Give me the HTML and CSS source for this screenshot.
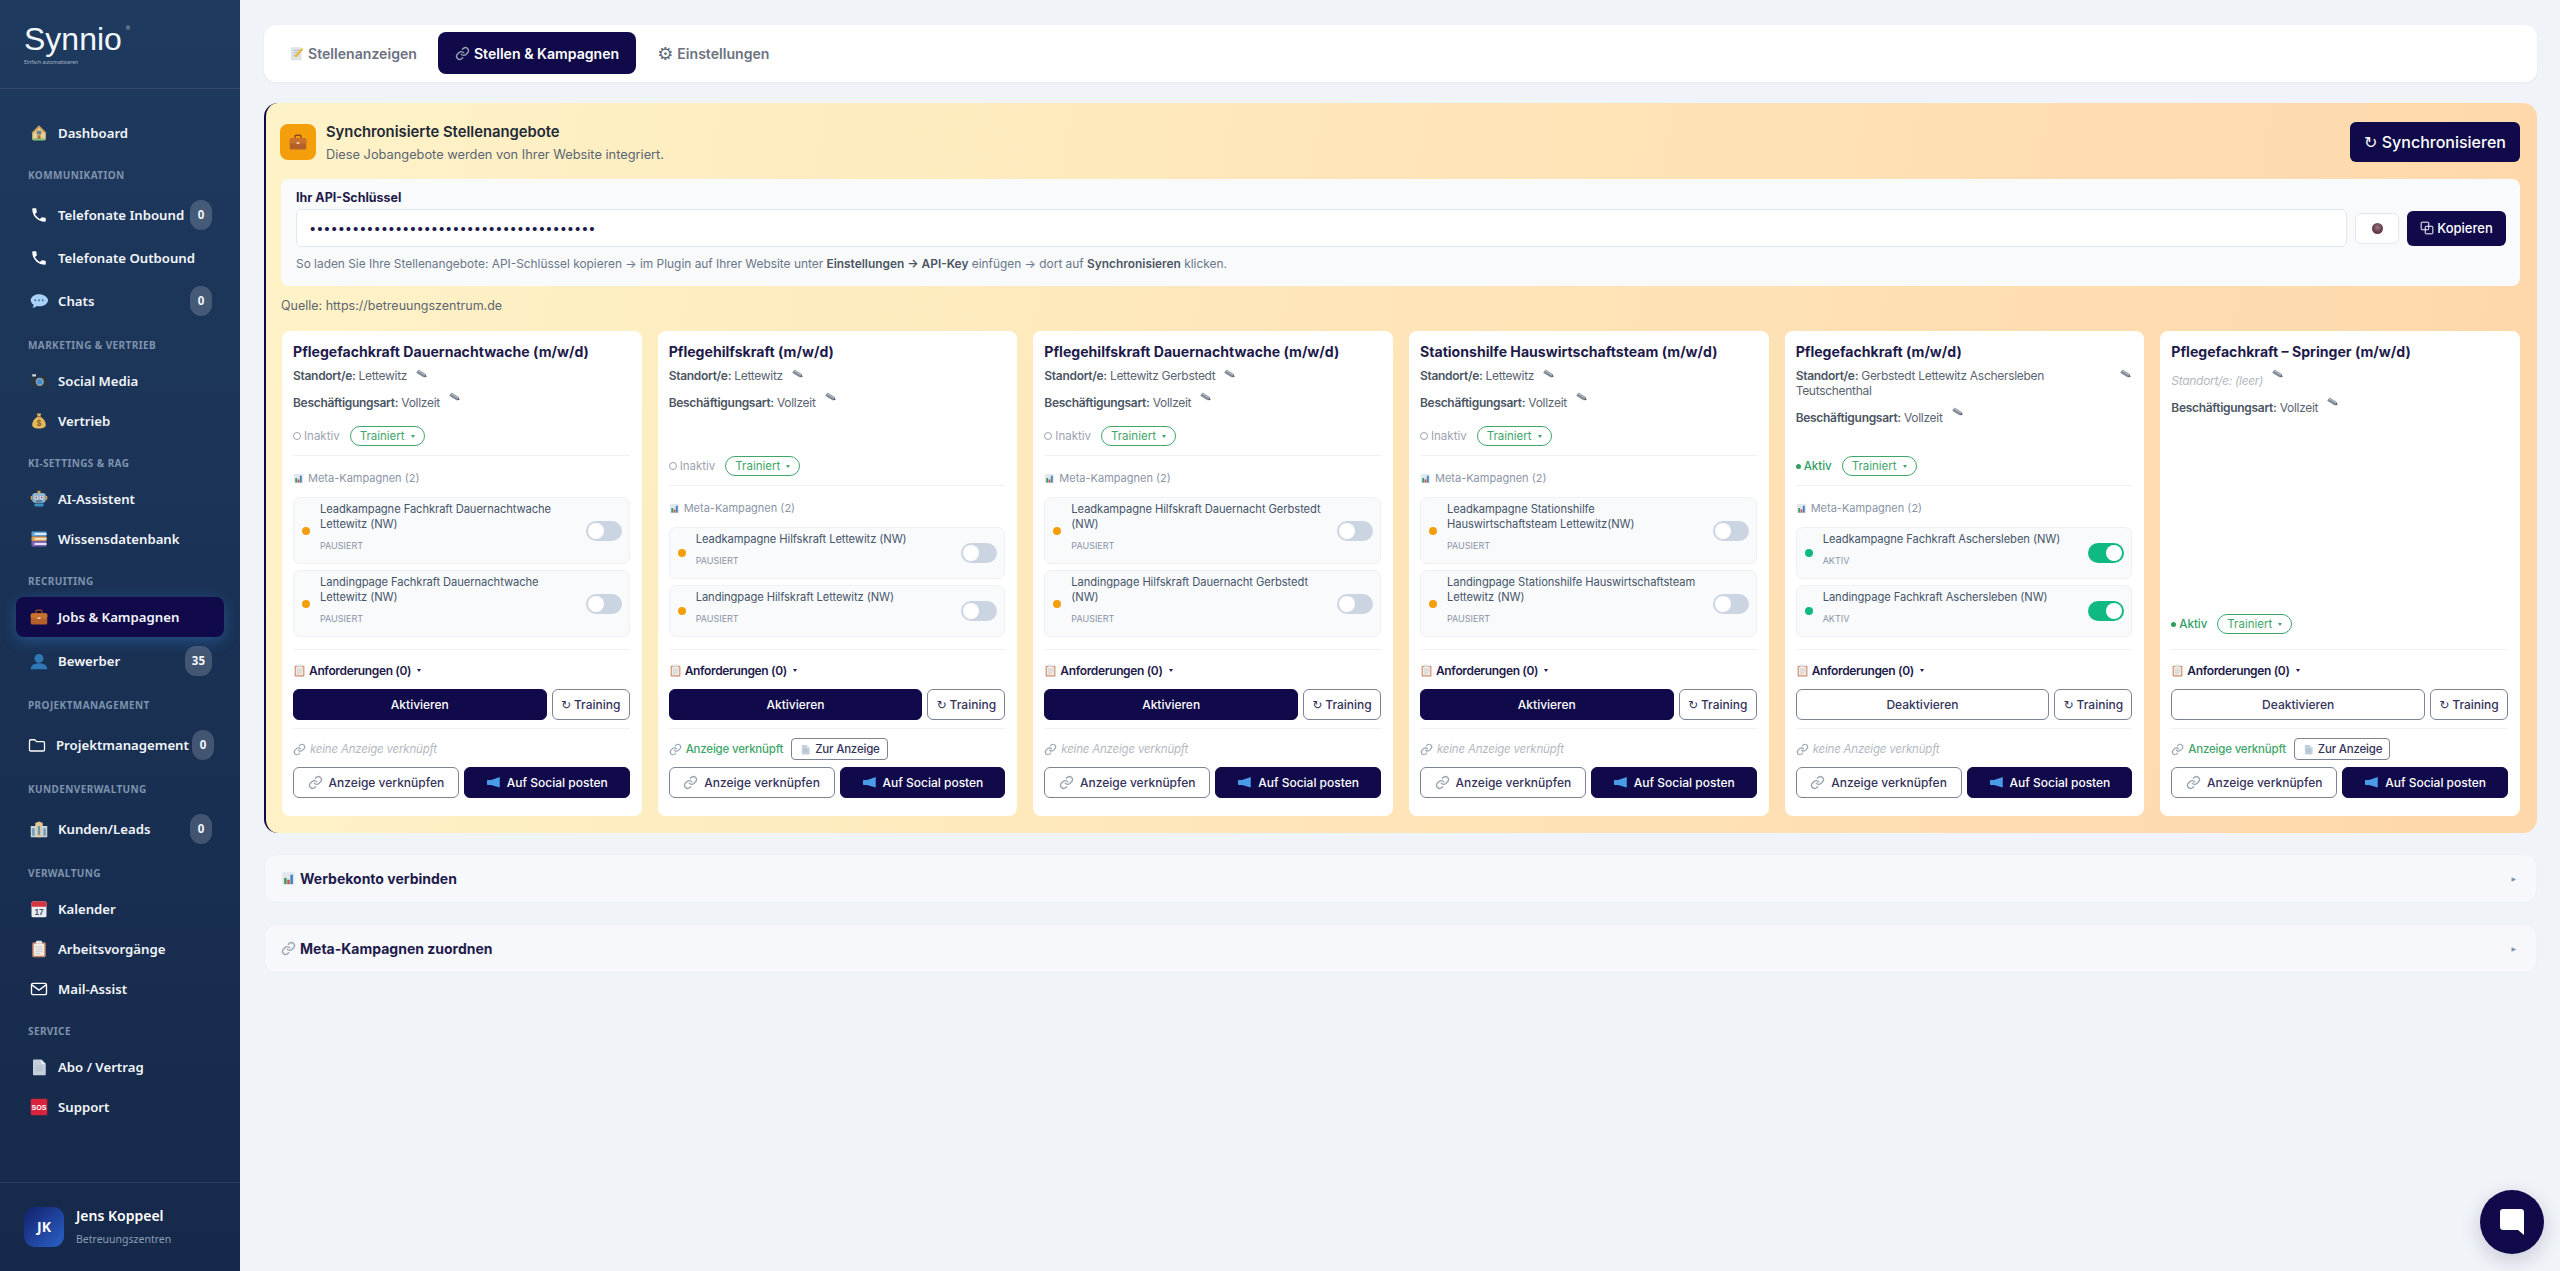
FILE: index.html
```html
<!DOCTYPE html>
<html lang="de">
<head>
  <meta charset="UTF-8">
  <meta name="viewport" content="width=device-width, initial-scale=1.0">
  <title>Jobs &amp; Kampagnen</title>
  <link rel="stylesheet" href="styles.css">
</head>
<body>

  <!-- icon sprite -->
  <svg class="sprite" xmlns="http://www.w3.org/2000/svg">
    <symbol id="i-house" viewBox="0 0 24 24"><path d="M12 2 3 11v10h18V11z" fill="#e9cf8f"/><path d="M12 2 2 12l2 1 8-8 8 8 2-1z" fill="#c99a55"/><rect x="9" y="9" width="6" height="5" fill="#6f7f92"/><rect x="4" y="19" width="16" height="3" fill="#8cc27f"/><rect x="10" y="15" width="4" height="5" fill="#a8743f"/></symbol>
    <symbol id="i-phone" viewBox="0 0 24 24"><path fill="#fff" d="M6.6 10.8c1.4 2.8 3.8 5.1 6.6 6.6l2.2-2.2c.3-.3.7-.4 1-.2 1.1.4 2.3.6 3.6.6.6 0 1 .4 1 1V20c0 .6-.4 1-1 1C10.6 21 3 13.4 3 4c0-.6.4-1 1-1h3.5c.6 0 1 .4 1 1 0 1.3.2 2.5.6 3.6.1.3 0 .7-.2 1z"/></symbol>
    <symbol id="i-chat" viewBox="0 0 24 24"><path fill="#a9d1f5" d="M12 3C6 3 1 6.6 1 11c0 2.500 1.600 4.700 4 6.100-.2 1.500-1 2.800-1.800 3.900 2.300-.2 4.400-1.100 6-2.400 1.200.3 2.500.4 3.800.4 6 0 11-3.600 11-8S18 3 12 3z"/><circle cx="7" cy="11" r="1.300" fill="#3b6ea5"/><circle cx="12" cy="11" r="1.300" fill="#3b6ea5"/><circle cx="17" cy="11" r="1.300" fill="#3b6ea5"/></symbol>
    <symbol id="i-camera" viewBox="0 0 24 24"><rect x="1" y="6" width="22" height="14" rx="2" fill="#2a3544"/><rect x="3" y="3" width="5" height="3" fill="#cfd6dd"/><circle cx="13" cy="13" r="5.500" fill="#8fa3b5"/><circle cx="13" cy="13" r="3.500" fill="#3f8fd0"/></symbol>
    <symbol id="i-robot" viewBox="0 0 24 24"><rect x="10" y="1" width="4" height="3" fill="#d9a441"/><rect x="3" y="4" width="18" height="13" rx="4" fill="#8db4cc"/><circle cx="8.500" cy="10" r="2.500" fill="#e4efff"/><circle cx="15.500" cy="10" r="2.500" fill="#e4efff"/><circle cx="8.500" cy="10" r="1.200" fill="#a03a3a"/><circle cx="15.500" cy="10" r="1.200" fill="#a03a3a"/><rect x="8" y="14" width="8" height="1.500" fill="#3d5a75"/><rect x="6" y="18" width="12" height="4" rx="1" fill="#3f8fc4"/><rect x="1" y="8" width="2" height="5" fill="#d9a441"/><rect x="21" y="8" width="2" height="5" fill="#d9a441"/></symbol>
    <symbol id="i-books" viewBox="0 0 24 24"><rect x="2" y="2" width="20" height="6.500" rx="1" fill="#5aa0d8"/><rect x="2" y="8.500" width="20" height="6.500" rx="1" fill="#e39a4a"/><rect x="2" y="15" width="20" height="7" rx="1" fill="#7a64b8"/><rect x="6" y="4" width="16" height="2.500" fill="#e8eef5"/><rect x="6" y="10.500" width="16" height="2.500" fill="#f6e6cf"/><rect x="6" y="17.200" width="16" height="2.800" fill="#e6e0f5"/></symbol>
    <symbol id="i-case" viewBox="0 0 24 24"><path d="M8 7V4.500C8 3.700 8.700 3 9.500 3h5c.8 0 1.500.7 1.500 1.500V7" fill="none" stroke="#8a4a20" stroke-width="1.800"/><rect x="1" y="7" width="22" height="15" rx="2" fill="#b4602a"/><rect x="1" y="7" width="22" height="7" rx="2" fill="#c9702f"/><rect x="10" y="12.500" width="4" height="2" fill="#f3d9b8"/></symbol>
    <symbol id="i-bust" viewBox="0 0 24 24"><circle cx="12" cy="8.500" r="6" fill="#2f78b5"/><path d="M1 23c0-5 4-8 11-8s11 3 11 8z" fill="#2f78b5"/></symbol>
    <symbol id="i-folder" viewBox="0 0 24 24"><path d="M2 6.500C2 5.700 2.700 5 3.500 5h5.500l2.500 2.500h9c.8 0 1.500.7 1.500 1.500v9.500c0 .8-.7 1.500-1.500 1.500h-17C2.700 20 2 19.300 2 18.500z" fill="none" stroke="#fff" stroke-width="1.700"/></symbol>
    <symbol id="i-office" viewBox="0 0 24 24"><rect x="1" y="8" width="22" height="15" fill="#c8d3d8"/><path d="M7 8V4l5-2 5 2v4z" fill="#e3c98f"/><rect x="9" y="5" width="6" height="18" fill="#e3c98f"/><g fill="#6f94ad"><rect x="3" y="11" width="3" height="10"/><rect x="18" y="11" width="3" height="10"/><rect x="10.500" y="8" width="3" height="12"/></g></symbol>
    <symbol id="i-clip" viewBox="0 0 24 24"><rect x="3" y="3" width="18" height="20" rx="2" fill="#c98468"/><rect x="5" y="5" width="14" height="16" fill="#f5ede3"/><rect x="8" y="1" width="8" height="4" rx="1" fill="#dfe5ea"/><path d="M7 9h10M7 12h10M7 15h10M7 18h7" stroke="#b7bfc8" stroke-width="1"/></symbol>
    <symbol id="i-mail" viewBox="0 0 24 24"><rect x="2" y="4.500" width="20" height="15" rx="2" fill="none" stroke="#fff" stroke-width="1.800"/><path d="m2.500 6.500 9.500 7 9.500-7" fill="none" stroke="#fff" stroke-width="1.800"/></symbol>
    <symbol id="i-page" viewBox="0 0 24 24"><path d="M4 3c0-.6.4-1 1-1h10l6 6v14c0 .6-.4 1-1 1H5c-.6 0-1-.4-1-1z" fill="#c3d0dc"/><path d="M15 2v6h6z" fill="#e6edf3"/><path d="M7 11h10M7 14h10M7 17h10" stroke="#a5b4c2" stroke-width="1"/></symbol>
    <symbol id="i-memo" viewBox="0 0 24 24"><rect x="3" y="2" width="17" height="21" fill="#dfe3e8"/><path d="M7 7h9M7 11h9M7 15h6" stroke="#aab2bc" stroke-width="1.200"/><path d="m9 18 1-4L20 3l3 2.500L13 17z" fill="#e6b94a"/></symbol>
    <symbol id="i-link" viewBox="0 0 24 24"><g fill="none" stroke="#9aa5b1" stroke-width="2.200" stroke-linecap="round"><path d="M10 13a5 5 0 0 0 7.500.5l3-3a5 5 0 0 0-7-7l-1.700 1.700"/><path d="M14 11a5 5 0 0 0-7.500-.5l-3 3a5 5 0 0 0 7 7l1.700-1.700"/></g></symbol>
    <symbol id="i-chart" viewBox="0 0 24 24"><rect x="2" y="2" width="20" height="20" fill="#e2e8ee"/><rect x="5" y="11" width="4" height="10" fill="#3f9a63"/><rect x="10" y="14" width="4" height="7" fill="#d3524a"/><rect x="15" y="6" width="4" height="15" fill="#3b82c4"/></symbol>
    <symbol id="i-pencil" viewBox="0 0 24 24"><g transform="rotate(32 12 12)"><rect x="1" y="8" width="17" height="8" fill="#7f8a98"/><path d="M1 10.500h17" stroke="#d5dae0" stroke-width="1.400"/><path d="m18 8 5 4-5 4z" fill="#5c6572"/></g></symbol>
    <symbol id="i-mega" viewBox="0 0 24 24"><path d="M22 3v17L8 16H3c-1 0-1.500-.5-1.500-1.500v-5C1.500 8.500 2 8 3 8h5z" fill="#4a9be8"/></symbol>
    <symbol id="i-copy" viewBox="0 0 24 24"><g fill="none" stroke="#fff" stroke-width="1.700"><rect x="2" y="2" width="13" height="13" rx="1.500"/><rect x="9" y="9" width="13" height="13" rx="1.500"/></g></symbol>
  </svg>

  <aside class="sidebar">
    <div class="logo">
      <div class="logo-name">Synnio<sup>®</sup></div>
      <div class="logo-sub">Einfach automatisieren</div>
    </div>

    <nav class="nav">
      <a class="nav-item"><svg class="nav-icon"><use href="#i-house"/></svg>Dashboard</a>

      <div class="nav-label">Kommunikation</div>
      <a class="nav-item has-badge"><svg class="nav-icon"><use href="#i-phone"/></svg>Telefonate Inbound<span class="badge">0</span></a>
      <a class="nav-item has-badge"><svg class="nav-icon"><use href="#i-phone"/></svg>Telefonate Outbound</a>
      <a class="nav-item has-badge"><svg class="nav-icon"><use href="#i-chat"/></svg>Chats<span class="badge">0</span></a>

      <div class="nav-label">Marketing &amp; Vertrieb</div>
      <a class="nav-item"><svg class="nav-icon"><use href="#i-camera"/></svg>Social Media</a>
      <a class="nav-item">
        <svg class="nav-icon" viewBox="0 0 24 24"><path fill="#e6b85c" d="M9 2h6l-1.500 4c4 2 7.500 6.500 7.500 11 0 3.500-3 5-9 5s-9-1.500-9-5c0-4.500 3.500-9 7.500-11z"/><rect x="9.500" y="5.500" width="5" height="1.500" fill="#9a6f2b"/><text x="12" y="19" font-size="11" font-weight="700" text-anchor="middle" fill="#7c5a1f" font-family="Liberation Sans">$</text></svg>Vertrieb
      </a>

      <div class="nav-label">KI-Settings &amp; RAG</div>
      <a class="nav-item"><svg class="nav-icon"><use href="#i-robot"/></svg>AI-Assistent</a>
      <a class="nav-item"><svg class="nav-icon"><use href="#i-books"/></svg>Wissensdatenbank</a>

      <div class="nav-label">Recruiting</div>
      <a class="nav-item active"><svg class="nav-icon"><use href="#i-case"/></svg>Jobs &amp; Kampagnen</a>
      <a class="nav-item has-badge"><svg class="nav-icon"><use href="#i-bust"/></svg>Bewerber<span class="badge">35</span></a>

      <div class="nav-label">Projektmanagement</div>
      <a class="nav-item has-badge nudge"><svg class="nav-icon"><use href="#i-folder"/></svg>Projektmanagement<span class="badge">0</span></a>

      <div class="nav-label">Kundenverwaltung</div>
      <a class="nav-item has-badge"><svg class="nav-icon"><use href="#i-office"/></svg>Kunden/Leads<span class="badge">0</span></a>

      <div class="nav-label">Verwaltung</div>
      <a class="nav-item">
        <svg class="nav-icon" viewBox="0 0 24 24"><rect x="2" y="2" width="20" height="21" rx="2" fill="#e8edf2"/><path d="M2 4c0-1.100.9-2 2-2h16c1.100 0 2 .9 2 2v5H2z" fill="#d9333f"/><text x="12" y="20.500" font-size="11" text-anchor="middle" fill="#44566a" font-family="Liberation Sans">17</text></svg>Kalender
      </a>
      <a class="nav-item"><svg class="nav-icon"><use href="#i-clip"/></svg>Arbeitsvorgänge</a>
      <a class="nav-item"><svg class="nav-icon"><use href="#i-mail"/></svg>Mail-Assist</a>

      <div class="nav-label">Service</div>
      <a class="nav-item"><svg class="nav-icon"><use href="#i-page"/></svg>Abo / Vertrag</a>
      <a class="nav-item">
        <svg class="nav-icon" viewBox="0 0 24 24"><rect x="1" y="1" width="22" height="22" rx="2" fill="#d9233c"/><text x="12" y="16" font-size="9.500" font-weight="700" text-anchor="middle" fill="#fff" font-family="Liberation Sans">SOS</text></svg>Support
      </a>
    </nav>

    <div class="user">
      <div class="avatar">JK</div>
      <div>
        <div class="user-name">Jens Koppeel</div>
        <div class="user-org">Betreuungszentren</div>
      </div>
    </div>
  </aside>

  <main class="main">
    <div class="tabs">
      <button class="tab"><svg class="tab-icon"><use href="#i-memo"/></svg>Stellenanzeigen</button>
      <button class="tab active"><svg class="tab-icon"><use href="#i-link"/></svg>Stellen &amp; Kampagnen</button>
      <button class="tab"><span class="gear">⚙</span>Einstellungen</button>
    </div>

    <section class="panel">
      <div class="panel-head">
        <div class="panel-icon"><svg><use href="#i-case"/></svg></div>
        <div class="panel-titles">
          <div class="panel-title">Synchronisierte Stellenangebote</div>
          <div class="panel-sub">Diese Jobangebote werden von Ihrer Website integriert.</div>
        </div>
        <button class="btn-sync"><span class="sym">↻</span> Synchronisieren</button>
      </div>

      <div class="api-box">
        <div class="api-label">Ihr API-Schlüssel</div>
        <div class="api-row">
          <div class="api-input">••••••••••••••••••••••••••••••••••••••••</div>
          <button class="btn-eye"><span class="eye"></span></button>
          <button class="btn-copy"><svg><use href="#i-copy"/></svg>Kopieren</button>
        </div>
        <div class="api-help">So laden Sie Ihre Stellenangebote: API-Schlüssel kopieren → im Plugin auf Ihrer Website unter <b>Einstellungen → API-Key</b> einfügen → dort auf <b>Synchronisieren</b> klicken.</div>
      </div>

      <div class="source">Quelle: https://betreuungszentrum.de</div>

      <div class="cards" id="job-cards">
        <!-- job cards are added here -->
      </div>
    </section>

    <div class="fold"><svg class="fold-icon"><use href="#i-chart"/></svg>Werbekonto verbinden<span class="fold-arrow">▶</span></div>
    <div class="fold"><svg class="fold-icon"><use href="#i-link"/></svg>Meta-Kampagnen zuordnen<span class="fold-arrow">▶</span></div>
  </main>

  <button class="chat-btn">
    <svg viewBox="0 0 24 26" width="24" height="26"><path fill="#fff" d="M3 0h18c1.700 0 3 1.300 3 3v23l-6-5H3c-1.700 0-3-1.300-3-3V3C0 1.300 1.300 0 3 0z"/></svg>
  </button>

  <script>
    const jobs = [
      {
        title: "Pflegefachkraft Dauernachtwache (m/w/d)", place: "Lettewitz", active: false, linked: false,
        campaigns: ["Leadkampagne Fachkraft Dauernachtwache Lettewitz (NW)", "Landingpage Fachkraft Dauernachtwache Lettewitz (NW)"]
      },
      {
        title: "Pflegehilfskraft (m/w/d)", place: "Lettewitz", active: false, linked: true,
        campaigns: ["Leadkampagne Hilfskraft Lettewitz (NW)", "Landingpage Hilfskraft Lettewitz (NW)"]
      },
      {
        title: "Pflegehilfskraft Dauernachtwache (m/w/d)", place: "Lettewitz Gerbstedt", active: false, linked: false,
        campaigns: ["Leadkampagne Hilfskraft Dauernacht Gerbstedt (NW)", "Landingpage Hilfskraft Dauernacht Gerbstedt (NW)"]
      },
      {
        title: "Stationshilfe Hauswirtschaftsteam (m/w/d)", place: "Lettewitz", active: false, linked: false,
        campaigns: ["Leadkampagne Stationshilfe Hauswirtschaftsteam Lettewitz(NW)", "Landingpage Stationshilfe Hauswirtschaftsteam Lettewitz (NW)"]
      },
      {
        title: "Pflegefachkraft (m/w/d)", place: "Gerbstedt Lettewitz Aschersleben Teutschenthal", active: true, linked: false,
        campaigns: ["Leadkampagne Fachkraft Aschersleben (NW)", "Landingpage Fachkraft Aschersleben (NW)"]
      },
      {
        title: "Pflegefachkraft – Springer (m/w/d)", place: "", active: true, linked: true,
        campaigns: []
      }
    ];

    const icon = (name, cls) => `<svg class="${cls}"><use href="#i-${name}"/></svg>`;

    const container = document.getElementById("job-cards");

    jobs.forEach(job => {
      const card = document.createElement("div");
      card.className = "card";

      const place = job.place
        ? `<div class="row"><span><b>Standort/e:</b> ${job.place}</span>${icon("pencil", "pencil")}</div>`
        : `<div class="row empty"><span>Standort/e: (leer)</span>${icon("pencil", "pencil")}</div>`;

      const status = job.active
        ? `<span class="state on"><i class="pip"></i>Aktiv</span>`
        : `<span class="state"><i class="ring"></i>Inaktiv</span>`;

      let meta = "";
      if (job.campaigns.length) {
        const rows = job.campaigns.map(name => `
          <div class="camp">
            <span class="dot ${job.active ? "on" : ""}"></span>
            <div class="camp-text">
              <div class="camp-name">${name}</div>
              <div class="camp-state">${job.active ? "Aktiv" : "Pausiert"}</div>
            </div>
            <span class="toggle ${job.active ? "on" : ""}"></span>
          </div>`).join("");
        meta = `
          <div class="line"></div>
          <div class="meta-label">${icon("chart", "meta-icon")}Meta-Kampagnen (${job.campaigns.length})</div>
          ${rows}`;
      }

      const link = job.linked
        ? `${icon("link", "link-icon")}<span class="link-ok">Anzeige verknüpft</span><button class="btn-mini">${icon("page", "mini-icon")}Zur Anzeige</button>`
        : `${icon("link", "link-icon")}<span class="link-none">keine Anzeige verknüpft</span>`;

      card.innerHTML = `
        <div class="card-title">${job.title}</div>
        ${place}
        <div class="row work"><span><b>Beschäftigungsart:</b> Vollzeit</span>${icon("pencil", "pencil")}</div>
        <div class="status-row">${status}<span class="pill">Trainiert<i class="caret"></i></span></div>
        ${meta}
        <div class="line low"></div>
        <div class="reqs">${icon("clip", "req-icon")}Anforderungen (0)<i class="caret dark"></i></div>
        <div class="btn-row">
          <button class="btn ${job.active ? "ghost" : "solid"} grow">${job.active ? "Deaktivieren" : "Aktivieren"}</button>
          <button class="btn ghost train"><span class="sym">↻</span>Training</button>
        </div>
        <div class="line mid"></div>
        <div class="link-row">${link}</div>
        <div class="btn-row">
          <button class="btn ghost half">${icon("link", "btn-icon")}Anzeige verknüpfen</button>
          <button class="btn solid half">${icon("mega", "btn-icon")}Auf Social posten</button>
        </div>`;

      container.appendChild(card);
    });
  </script>
</body>
</html>
```

FILE: styles.css
```css
* {
  box-sizing: border-box;
}

body {
  margin: 0;
  display: flex;
  min-height: 100vh;
  background: #f0f4f8;
  font-family: "Inter", "Noto Sans", sans-serif;
  color: #1e1b4b;
  overflow: hidden;
}

button {
  font-family: inherit;
  cursor: pointer;
}

.sprite {
  position: absolute;
  width: 0;
  height: 0;
}

.sym {
  font-family: "DejaVu Sans", sans-serif;
  font-weight: 400;
}

/* sidebar */
.sidebar {
  width: 240px;
  height: 1271px;
  flex-shrink: 0;
  display: flex;
  flex-direction: column;
  background: linear-gradient(180deg, #1e3a5f 0%, #16294a 100%);
  font-family: "Noto Sans", sans-serif;
  color: #fff;
}

.logo {
  height: 89px;
  padding: 20px 0 0 24px;
  border-bottom: 1px solid rgba(255,255,255,0.09);
}

.logo-name {
  font-family: "Liberation Sans", sans-serif;
  font-size: 32px;
  line-height: 38px;
  color: #f4f7fa;
}

.logo-name sup {
  font-size: 6px;
  vertical-align: 20px;
  line-height: 0;
  opacity: .7;
  margin-left: 4px;
}

.logo-sub {
  font-size: 5px;
  line-height: 6px;
  margin-top: 1px;
  color: #a9b8c9;
}

.nav {
  padding-top: 24px;
  flex: 1;
}

.nav-item {
  display: flex;
  align-items: center;
  height: 40px;
  margin: 0 16px;
  padding-left: 14px;
  font-size: 13.2px;
  font-weight: 600;
  color: #f3f6fa;
  border-radius: 8px;
}

.nav-item.has-badge {
  height: 43px;
}

/* badge rows sit a little lower under their section label */
.nav-label + .has-badge,
.active + .has-badge {
  margin-top: 2px;
}

.has-badge:has(+ .nav-label) {
  margin-bottom: 1px;
}

.nav-item.active {
  background: #100a4a;
  box-shadow: 0 4px 14px rgba(56,140,230,0.35);
}

.nav-item.nudge {
  padding-left: 12px;
}

.nav-item.nudge .badge {
  margin-right: 10px;
}

.nav-icon {
  width: 18px;
  height: 18px;
  margin-right: 10px;
  flex-shrink: 0;
}

.badge {
  margin-left: auto;
  margin-right: 12px;
  min-width: 22px;
  height: 30px;
  padding: 0 7px;
  border-radius: 11px;
  background: rgba(255,255,255,0.18);
  font-size: 11.5px;
  font-weight: 700;
  line-height: 30px;
  text-align: center;
}

.nav-label {
  height: 38px;
  padding: 15px 0 0 28px;
  font-size: 10px;
  line-height: 14px;
  font-weight: 700;
  letter-spacing: 0.4px;
  text-transform: uppercase;
  color: #7f93ad;
}

.user {
  display: flex;
  align-items: center;
  gap: 12px;
  height: 89px;
  padding: 0 24px;
  border-top: 1px solid rgba(255,255,255,0.09);
}

.avatar {
  width: 40px;
  height: 40px;
  border-radius: 11px;
  background: linear-gradient(135deg, #14206b, #2a62c8);
  font-size: 14px;
  font-weight: 700;
  line-height: 40px;
  text-align: center;
}

.user-name {
  font-size: 14px;
  font-weight: 600;
  line-height: 18px;
}

.user-org {
  margin-top: 7px;
  font-size: 10.5px;
  line-height: 15px;
  color: #8b9db5;
}

/* main */
.main {
  flex: 1;
  min-width: 0;
  padding: 25px 23px 0 24px;
}

.tabs {
  display: flex;
  gap: 4px;
  height: 57px;
  padding: 7px 8px 8px;
  margin-bottom: 21px;
  background: #fff;
  border-radius: 12px;
  box-shadow: 0 1px 3px rgba(15,23,42,0.05);
}

.tab {
  display: flex;
  align-items: center;
  padding: 0 17px;
  border: none;
  border-radius: 8px;
  background: none;
  font-size: 14.1px;
  font-weight: 600;
  color: #6b7280;
}

.tab.active {
  background: #100a4a;
  color: #fff;
}

.tab-icon {
  width: 15px;
  height: 17px;
  margin-right: 4px;
}

.gear {
  font-family: "DejaVu Sans", sans-serif;
  font-size: 18px;
  margin-right: 4px;
  color: #5f6b7a;
}

.panel {
  margin-bottom: 21px;
  padding: 19px 17px 17px 16px;
  border-left: 2px solid #100a4a;
  border-radius: 14px;
  background: linear-gradient(100deg, #fef3c7 0%, #fed7aa 100%);
}

.panel-head {
  display: flex;
  align-items: center;
  height: 40px;
  margin-bottom: 17px;
  margin-left: -2px;
}

.panel-icon {
  width: 36px;
  height: 36px;
  margin-right: 10px;
  border-radius: 8px;
  background: #f59e0b;
  display: flex;
  align-items: center;
  justify-content: center;
}

.panel-icon svg {
  width: 18px;
  height: 18px;
}

.panel-titles {
  flex: 1;
}

.panel-title {
  font-size: 14.8px;
  font-weight: 600;
  line-height: 20px;
  color: #1f2937;
}

.panel-sub {
  margin-top: 4px;
  font-size: 12.8px;
  line-height: 17px;
  color: #5b6472;
}

.btn-sync {
  width: 170px;
  height: 40px;
  border: none;
  border-radius: 6px;
  background: #100a4a;
  color: #fff;
  font-size: 16px;
  font-weight: 500;
}

.api-box {
  height: 107px;
  margin-left: -1px;
  padding: 11px 14px 0 15px;
  border-radius: 8px;
  background: #f8fafc;
}

.api-label {
  font-size: 12.5px;
  font-weight: 700;
  line-height: 15px;
  color: #1e1b4b;
}

.api-row {
  display: flex;
  align-items: center;
  gap: 8px;
  margin-top: 4px;
}

.api-input {
  flex: 1;
  height: 38px;
  padding-left: 12px;
  border: 1px solid #e2e8f0;
  border-radius: 6px;
  background: #fff;
  font-size: 13px;
  line-height: 36px;
  letter-spacing: -0.15px;
  color: #1e1b4b;
}

.btn-eye {
  width: 44px;
  height: 31px;
  padding: 0;
  border: 1px solid #e2e8f0;
  border-radius: 6px;
  background: #fff;
  display: flex;
  align-items: center;
  justify-content: center;
}

.eye {
  width: 11px;
  height: 11px;
  border-radius: 50%;
  background: radial-gradient(circle at 50% 40%, #8f7c86 0%, #6a3b48 55%, #5a3540 100%);
}

.btn-copy {
  display: flex;
  align-items: center;
  justify-content: center;
  width: 99px;
  height: 35px;
  border: none;
  border-radius: 6px;
  background: #100a4a;
  color: #fff;
  font-size: 13px;
  font-weight: 500;
}

.btn-copy svg {
  width: 14px;
  height: 14px;
  margin-right: 3px;
}

.api-help {
  margin-top: 9px;
  font-size: 11.9px;
  line-height: 16px;
  color: #6b7688;
}

.api-help b {
  font-weight: 600;
  color: #4b5563;
}

.source {
  margin: 12px 0 17px -1px;
  font-size: 12.5px;
  line-height: 16px;
  color: #5f6672;
}

.cards {
  display: grid;
  grid-template-columns: repeat(6, minmax(0, 1fr));
  gap: 16px;
}

.card {
  display: flex;
  flex-direction: column;
  height: 485px;
  padding: 12px 12px 18px 11px;
  border-radius: 8px;
  background: #fff;
}

.card-title {
  margin-bottom: 7px;
  font-size: 14.1px;
  font-weight: 700;
  line-height: 18px;
  white-space: nowrap;
  color: #1e1b4b;
}

.row {
  display: flex;
  gap: 9px;
  margin-bottom: 12px;
  font-size: 12px;
  line-height: 15px;
  letter-spacing: -0.3px;
  color: #5b6472;
}

.row b {
  font-weight: 600;
  color: #4b5563;
}

.row.empty {
  margin-top: 5px;
  font-style: italic;
  color: #b3b9c2;
}

.pencil {
  width: 12px;
  height: 12px;
  flex-shrink: 0;
}

.work .pencil {
  margin-top: -4px;
}

.empty .pencil {
  margin-top: -5px;
}

.status-row {
  display: flex;
  align-items: center;
  gap: 10px;
  margin-top: auto;
  margin-bottom: 9px;
  font-size: 11.5px;
}

.state {
  color: #9ca3af;
}

.state.on {
  color: #2e9f5f;
  font-weight: 500;
}

.ring,
.pip {
  display: inline-block;
  border-radius: 50%;
}

.ring {
  width: 8px;
  height: 8px;
  margin-right: 3px;
  border: 1px solid #9ca3af;
}

.pip {
  width: 5px;
  height: 5px;
  margin-right: 3px;
  vertical-align: 1px;
  background: #2e9f5f;
}

.pill {
  display: inline-flex;
  align-items: center;
  height: 20px;
  padding: 0 9px;
  border: 1px solid #3fa66a;
  border-radius: 10px;
  color: #3fa66a;
}

.caret {
  display: inline-block;
  margin-left: 6px;
  border-left: 2.5px solid transparent;
  border-right: 2.5px solid transparent;
  border-top: 3px solid #3fa66a;
}

.caret.dark {
  border-top-color: #1e1b4b;
}

.line {
  height: 1px;
  background: #eef1f5;
  flex-shrink: 0;
}

.low {
  margin-top: 6px;
}

.mid {
  margin-top: 8px;
}

.meta-label {
  display: flex;
  align-items: center;
  height: 14px;
  margin: 15px 0 12px;
  font-size: 11px;
  color: #8a94a6;
}

.meta-icon {
  width: 11px;
  height: 11px;
  margin-right: 4px;
}

.camp {
  display: flex;
  align-items: center;
  margin-bottom: 6px;
  padding: 4px 7px 11px 8px;
  border: 1px solid #eef1f5;
  border-radius: 7px;
  background: #f8fafc;
}

.dot {
  width: 8px;
  height: 8px;
  flex-shrink: 0;
  margin: 7px 10px 0 0;
  border-radius: 50%;
  background: #f59e0b;
}

.dot.on {
  background: #10b981;
}

.camp-text {
  flex: 1;
  min-width: 0;
  padding-right: 6px;
}

.camp-name {
  font-size: 11.2px;
  line-height: 15px;
  letter-spacing: -0.08px;
  color: #475569;
}

.camp-state {
  margin-top: 7px;
  font-size: 9px;
  line-height: 13px;
  text-transform: uppercase;
  color: #8a94a6;
}

.toggle {
  position: relative;
  width: 36px;
  height: 20px;
  flex-shrink: 0;
  margin-top: 7px;
  border-radius: 10px;
  background: #cbd5e1;
}

.toggle::after {
  content: "";
  position: absolute;
  top: 2px;
  left: 2px;
  width: 16px;
  height: 16px;
  border-radius: 50%;
  background: #fff;
}

.toggle.on {
  background: #10b981;
}

.toggle.on::after {
  left: 18px;
}

.reqs {
  display: flex;
  align-items: center;
  height: 16px;
  margin: 12px 0 11px;
  font-size: 12px;
  font-weight: 600;
  letter-spacing: -0.35px;
}

.req-icon {
  width: 13px;
  height: 15px;
  margin-right: 3px;
}

.btn-row {
  display: flex;
  gap: 5px;
}

.btn {
  display: flex;
  align-items: center;
  justify-content: center;
  height: 31px;
  padding: 0;
  border-radius: 6px;
  font-size: 12px;
  font-weight: 500;
}

.solid {
  border: 1px solid #100a4a;
  background: #100a4a;
  color: #fff;
}

.ghost {
  border: 1px solid #7c8494;
  background: #fff;
  color: #35335a;
}

.grow {
  flex: 1;
}

.train {
  width: 78px;
  gap: 3px;
}

.half {
  flex: 1;
  min-width: 0;
}

.btn-icon {
  width: 15px;
  height: 15px;
  margin-right: 6px;
}

.line + .link-row {
  margin-top: 9px;
}

.link-row {
  display: flex;
  align-items: center;
  height: 22px;
  margin-bottom: 7px;
  font-size: 11.5px;
  letter-spacing: -0.2px;
}

.link-icon {
  width: 13px;
  height: 13px;
  margin-right: 4px;
}

.link-ok {
  color: #3fa66a;
  font-weight: 500;
}

.link-none {
  font-style: italic;
  color: #b3b9c2;
}

.btn-mini {
  display: flex;
  align-items: center;
  height: 22px;
  margin-left: 8px;
  padding: 0 7px 0 8px;
  border: 1px solid #7c8494;
  border-radius: 4px;
  background: #fff;
  color: #35335a;
  font-size: 11.5px;
  font-weight: 500;
  letter-spacing: -0.2px;
}

.mini-icon {
  width: 11px;
  height: 13px;
  margin-right: 4px;
}

.fold {
  display: flex;
  align-items: center;
  height: 49px;
  margin-bottom: 21px;
  padding: 0 20px 0 16px;
  border: 1px solid #edf1f6;
  border-radius: 12px;
  background: #f6f8fc;
  font-size: 14px;
  font-weight: 700;
  color: #1e1b4b;
}

.fold-icon {
  width: 15px;
  height: 15px;
  margin-right: 4px;
}

.fold-arrow {
  margin-left: auto;
  font-family: "DejaVu Sans", sans-serif;
  font-size: 6px;
  font-weight: 400;
  color: #8a94a6;
}

.chat-btn {
  position: fixed;
  right: 16px;
  bottom: 17px;
  width: 64px;
  height: 64px;
  padding: 0;
  border: none;
  border-radius: 50%;
  background: #100a4a;
  box-shadow: 0 6px 20px rgba(16,10,74,0.18);
  display: flex;
  align-items: center;
  justify-content: center;
}
```
